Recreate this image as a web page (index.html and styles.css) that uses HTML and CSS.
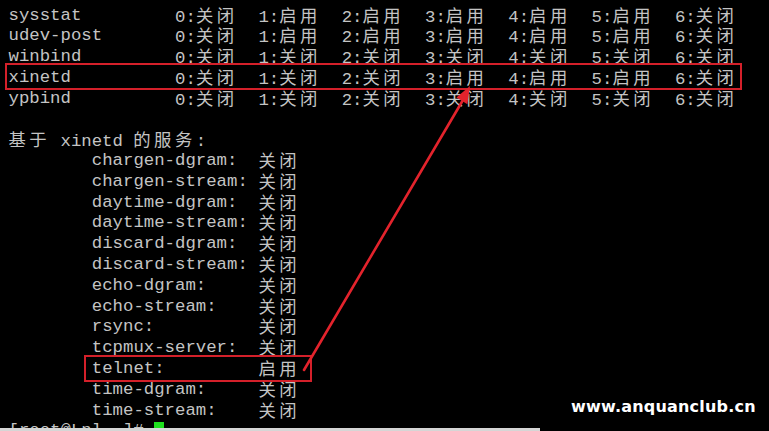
FILE: index.html
```html
<!DOCTYPE html>
<html lang="zh-CN">
<head>
<meta charset="utf-8">
<title>chkconfig --list</title>
<link rel="stylesheet" href="styles.css">
</head>
<body>
<div class="screen">
  <div class="term">
    <div class="svc"><span>sysstat</span><span>0:<i>关闭</i></span><span>1:<i>启用</i></span><span>2:<i>启用</i></span><span>3:<i>启用</i></span><span>4:<i>启用</i></span><span>5:<i>启用</i></span><span>6:<i>关闭</i></span></div>
    <div class="svc"><span>udev-post</span><span>0:<i>关闭</i></span><span>1:<i>启用</i></span><span>2:<i>启用</i></span><span>3:<i>启用</i></span><span>4:<i>启用</i></span><span>5:<i>启用</i></span><span>6:<i>关闭</i></span></div>
    <div class="svc"><span>winbind</span><span>0:<i>关闭</i></span><span>1:<i>关闭</i></span><span>2:<i>关闭</i></span><span>3:<i>关闭</i></span><span>4:<i>关闭</i></span><span>5:<i>关闭</i></span><span>6:<i>关闭</i></span></div>
    <div class="svc"><span>xinetd</span><span>0:<i>关闭</i></span><span>1:<i>关闭</i></span><span>2:<i>关闭</i></span><span>3:<i>启用</i></span><span>4:<i>启用</i></span><span>5:<i>启用</i></span><span>6:<i>关闭</i></span></div>
    <div class="svc"><span>ypbind</span><span>0:<i>关闭</i></span><span>1:<i>关闭</i></span><span>2:<i>关闭</i></span><span>3:<i>关闭</i></span><span>4:<i>关闭</i></span><span>5:<i>关闭</i></span><span>6:<i>关闭</i></span></div>
    <div class="line"></div>
    <div class="line"><i>基于</i> xinetd <i>的服务</i>:</div>
    <div class="xsvc"><span>chargen-dgram:</span><span><i>关闭</i></span></div>
    <div class="xsvc"><span>chargen-stream:</span><span><i>关闭</i></span></div>
    <div class="xsvc"><span>daytime-dgram:</span><span><i>关闭</i></span></div>
    <div class="xsvc"><span>daytime-stream:</span><span><i>关闭</i></span></div>
    <div class="xsvc"><span>discard-dgram:</span><span><i>关闭</i></span></div>
    <div class="xsvc"><span>discard-stream:</span><span><i>关闭</i></span></div>
    <div class="xsvc"><span>echo-dgram:</span><span><i>关闭</i></span></div>
    <div class="xsvc"><span>echo-stream:</span><span><i>关闭</i></span></div>
    <div class="xsvc"><span>rsync:</span><span><i>关闭</i></span></div>
    <div class="xsvc"><span>tcpmux-server:</span><span><i>关闭</i></span></div>
    <div class="xsvc"><span>telnet:</span><span><i>启用</i></span></div>
    <div class="xsvc"><span>time-dgram:</span><span><i>关闭</i></span></div>
    <div class="xsvc"><span>time-stream:</span><span><i>关闭</i></span></div>
    <div class="line prompt">[root@Lnl ~]# <span class="cursor"></span></div>
  </div>

  <div class="mark mark-xinetd"></div>
  <div class="mark mark-telnet"></div>
  <svg class="arrow" width="769" height="431" viewBox="0 0 769 431" aria-hidden="true">
    <line x1="304" y1="370" x2="463" y2="100" stroke="#e3232c" stroke-width="2.6" stroke-linecap="round"/>
    <polygon points="470,86 467.4,104.2 456.4,97.6" fill="#e3232c"/>
  </svg>
  <div class="crop-edge"></div>
  <div class="watermark">www.anquanclub.cn</div>
</div>
</body>
</html>
```

FILE: styles.css
```css
html, body {
  margin: 0;
  padding: 0;
  background: #000;
}

.screen {
  position: relative;
  width: 769px;
  height: 431px;
  overflow: hidden;
  background: #000;
}

.term {
  padding: 5.5px 0 0 8.5px;
  font-family: "Liberation Mono", "Noto Sans CJK SC", monospace;
  font-size: 17.33px;
  line-height: 20.8px;
  color: #c4c4c4;
}

.term i {
  font-style: normal;
  font-family: "Noto Sans CJK SC", sans-serif;
  letter-spacing: 3.47px;
  line-height: 1;
}

.line,
.svc span,
.xsvc span {
  white-space: pre;
}

.line {
  height: 20.8px;
}

.svc {
  display: grid;
  grid-template-columns: 166.6px repeat(6, 83.3px) auto;
  height: 20.8px;
}

.xsvc {
  display: grid;
  grid-template-columns: 166.6px auto;
  padding-left: 83.3px;
  height: 20.8px;
}

.cursor {
  display: inline-block;
  width: 10.4px;
  height: 16px;
  background: #1ee01e;
  vertical-align: -3px;
}

.mark {
  position: absolute;
  border: 2.6px solid #d4202a;
  box-sizing: border-box;
}

.mark-xinetd {
  left: 5px;
  top: 63px;
  width: 737px;
  height: 27px;
}

.mark-telnet {
  left: 84px;
  top: 355px;
  width: 228px;
  height: 27px;
}

.arrow {
  position: absolute;
  left: 0;
  top: 0;
}

.crop-edge {
  position: absolute;
  left: 0;
  top: 428px;
  width: 540px;
  height: 3px;
  background: #d6d6d6;
}

.watermark {
  position: absolute;
  left: 571px;
  top: 396px;
  font-family: "DejaVu Sans", sans-serif;
  font-weight: bold;
  font-size: 16px;
  line-height: 22px;
  color: #fff;
  letter-spacing: 0.2px;
}
```
